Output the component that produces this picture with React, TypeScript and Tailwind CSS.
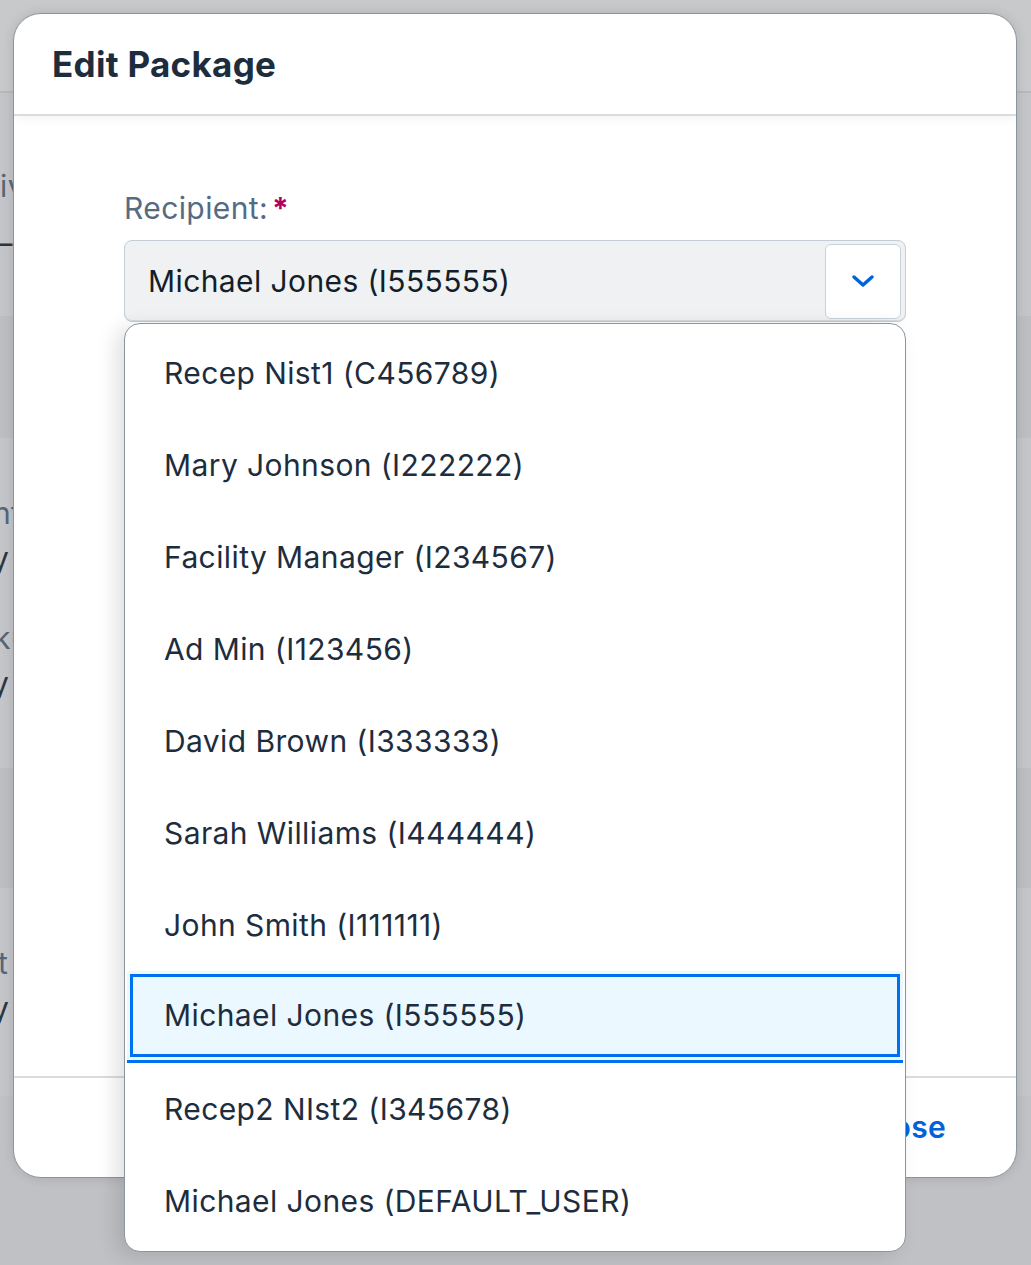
import React from "react";

const items = [
  "Recep Nist1 (C456789)",
  "Mary Johnson (I222222)",
  "Facility Manager (I234567)",
  "Ad Min (I123456)",
  "David Brown (I333333)",
  "Sarah Williams (I444444)",
  "John Smith (I111111)",
  "Michael Jones (I555555)",
  "Recep2 NIst2 (I345678)",
  "Michael Jones (DEFAULT_USER)",
];

const font = { fontFamily: 'Inter, "Noto Sans", sans-serif' };

export default function App() {
  return (
    <div className="relative w-[1031px] h-[1265px] overflow-hidden bg-[#c3c5c8]" style={font}>
      {/* dimmed background page */}
      <div className="flex flex-col w-full h-full text-[30px] leading-[36px] tracking-[0.4px]">
        <div className="h-[93px] bg-[#c8c9cb] border-b-2 border-[#b6b9bd]" />
        <div className="h-[223px] flex flex-col pt-[75px]">
          <div className="text-[#566678] whitespace-nowrap">ivery</div>
          <div className="text-[#2c3641] mt-[21px] ml-[-18px] whitespace-nowrap">——</div>
        </div>
        <div className="h-[122px] bg-[#bcbec1]" />
        <div className="h-[330px] flex flex-col pt-[57px]">
          <div className="text-[#566678] whitespace-nowrap ml-[-7px]">nfirmed</div>
          <div className="text-[#2c3641] mt-[9px] ml-[-8px] whitespace-nowrap">y</div>
          <div className="text-[#566678] mt-[44px] ml-[-6px] whitespace-nowrap">kup</div>
          <div className="text-[#2c3641] mt-[9px] ml-[-8px] whitespace-nowrap">y</div>
        </div>
        <div className="h-[120px] bg-[#bcbec1]" />
        <div className="h-[208px] flex flex-col pt-[57px]">
          <div className="text-[#566678] whitespace-nowrap ml-[-2px]">t</div>
          <div className="text-[#2c3641] mt-[9px] ml-[-8px] whitespace-nowrap">y</div>
        </div>
        <div className="flex-1 bg-[#bfc1c4]" />
      </div>

      {/* modal */}
      <div className="absolute left-[13px] top-[13px] w-[1004px] h-[1165px] rounded-[28px] border border-[#8a95a2] bg-white flex flex-col overflow-hidden shadow-[0_0_12px_rgba(0,0,0,0.12)]">
        <div className="h-[102px] shrink-0 border-b-2 border-[#dadcdf] px-[38px] flex items-center shadow-[0_4px_8px_rgba(0,0,0,0.04)]">
          <h1 className="text-[35px] font-bold text-[#1d2d3e] tracking-[0.3px]">Edit Package</h1>
        </div>
        <div className="flex-1 px-[110px] pt-[72px]">
          <div className="flex items-center gap-[4px] text-[30px] leading-[40px] tracking-[0.4px] text-[#556b82]">
            <span>Recipient:</span>
            <span className="text-[#b3005f] font-bold">*</span>
          </div>
          <div className="mt-[12px] h-[82px] rounded-[8px] border border-[#c4ccd5] bg-[#eff1f2] flex items-center pl-[23px] pr-[4px] shadow-[inset_0_-1px_0_#d5dadf]">
            <span className="flex-1 text-[30px] tracking-[0.4px] text-[#131e29]">Michael Jones (I555555)</span>
            <div className="w-[76px] h-[75px] rounded-[6px] border border-[#c9d1da] bg-white flex items-center justify-center">
              <svg width="24" height="16" viewBox="0 0 24 16">
                <path d="M3 4 L12 12 L21 4" fill="none" stroke="#0064d9" strokeWidth="3.5" strokeLinecap="round" strokeLinejoin="round" />
              </svg>
            </div>
          </div>
        </div>
        <div className="h-[101px] shrink-0 border-t-2 border-[#dadcdf] flex items-center justify-end pr-[70px]">
          <span className="text-[30px] font-semibold tracking-[0.3px] text-[#0064d9]">Close</span>
        </div>
      </div>

      {/* dropdown popover */}
      <div className="absolute left-[124px] top-[323px] w-[782px] h-[929px] rounded-[16px] border border-[#8a95a2] bg-white px-[2px] pt-[3px] shadow-[-8px_4px_20px_rgba(0,0,0,0.12)] text-[30px] tracking-[0.4px] text-[#1d2d3e]">
        {items.map((t, i) =>
          i === 7 ? (
            <div key={i} className="h-[92px] bg-[#ebf8ff] p-[3px] border-b-[3px] border-[#0070f2]">
              <div className="h-full border-[3px] border-[#0070f2] flex items-center pl-[31px]">
                {t}
              </div>
            </div>
          ) : (
            <div key={i} className="h-[92px] flex items-center pl-[37px]">
              {t}
            </div>
          )
        )}
      </div>
    </div>
  );
}
